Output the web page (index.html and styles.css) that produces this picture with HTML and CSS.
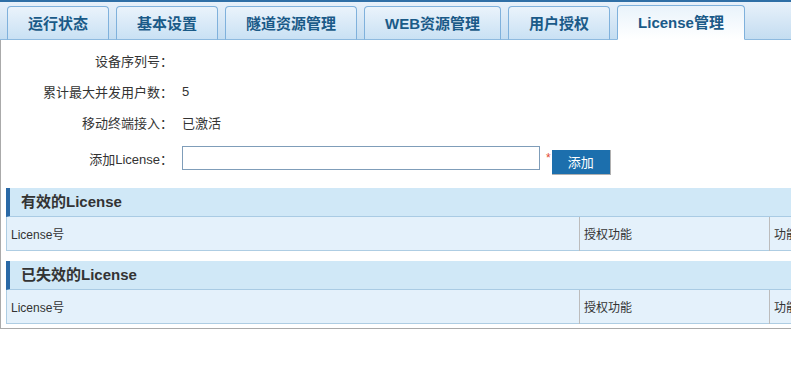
FILE: index.html
```html
<!DOCTYPE html>
<html lang="zh-CN">
<head>
<meta charset="UTF-8">
<title>License管理</title>
<link rel="stylesheet" href="styles.css">
</head>
<body>
<div class="tabbar">
    <a class="tab">运行状态</a>
    <a class="tab">基本设置</a>
    <a class="tab">隧道资源管理</a>
    <a class="tab">WEB资源管理</a>
    <a class="tab">用户授权</a>
    <a class="tab active">License管理</a>
</div>

<div class="panel">
    <div class="form">
        <div class="form-row">
            <div class="form-label">设备序列号：</div>
            <div class="form-value"></div>
        </div>
        <div class="form-row">
            <div class="form-label">累计最大并发用户数：</div>
            <div class="form-value">5</div>
        </div>
        <div class="form-row">
            <div class="form-label">移动终端接入：</div>
            <div class="form-value">已激活</div>
        </div>
        <div class="form-row form-row-input">
            <div class="form-label">添加License：</div>
            <div class="form-value">
                <input type="text" class="license-input">
                <span class="required">*</span>
                <button class="btn">添加</button>
            </div>
        </div>
    </div>

    <div class="section">
        <div class="section-title">有效的License</div>
        <table class="grid">
            <tr>
                <td class="col-no">License号</td>
                <td class="col-func">授权功能</td>
                <td>功能模块</td>
            </tr>
        </table>
    </div>

    <div class="section">
        <div class="section-title">已失效的License</div>
        <table class="grid">
            <tr>
                <td class="col-no">License号</td>
                <td class="col-func">授权功能</td>
                <td>功能模块</td>
            </tr>
        </table>
    </div>
</div>
</body>
</html>
```

FILE: styles.css
```css
html, body {
    overflow: hidden;
}

body {
    margin: 0;
    font-family: "Liberation Sans", "Noto Sans CJK SC", sans-serif;
    font-size: 13px;
    color: #333;
    background: #fff;
}

/* Tabs */
.tabbar {
    display: flex;
    align-items: flex-end;
    gap: 7px;
    height: 37px;
    padding-left: 7px;
    border-top: 2px solid #2f6fa6;
    border-bottom: 1px solid #8ebadf;
    background: linear-gradient(#e8f1fa, #c4ddf1);
}

.tab {
    display: block;
    height: 32px;
    line-height: 33px;
    padding: 0 20px;
    margin-bottom: -1px;
    border: 1px solid #7fb1dc;
    border-bottom: 1px solid #8ebadf;
    border-radius: 4px 4px 0 0;
    background: linear-gradient(#eaf3fb, #c9e1f4);
    color: #1a5a88;
    font-size: 15px;
    font-weight: bold;
    white-space: nowrap;
    cursor: pointer;
}

.tab.active {
    height: 33px;
    border-bottom-color: #fff;
    background: linear-gradient(#e9f3fb, #fff);
}

/* Panel */
.panel {
    width: 1100px;
    height: 288px;
    border-left: 1px solid #aaa;
    border-bottom: 1px solid #aaa;
    padding-left: 5px;
}

.form {
    padding-top: 5px;
    margin-left: -5px;
}

.form-row {
    display: flex;
    align-items: center;
    height: 31px;
}

.form-row-input {
    height: 40px;
}

.form-label {
    width: 172px;
    text-align: right;
    color: #333;
}

.form-value {
    display: flex;
    align-items: center;
    margin-left: 9px;
}

.license-input {
    width: 352px;
    height: 20px;
    margin: 0;
    padding: 1px 2px;
    border: 1px solid #7f9db9;
    font: inherit;
}

.required {
    margin-left: 6px;
    color: #e2492f;
    font-size: 12px;
}

.btn {
    width: 59px;
    height: 25px;
    margin: 8px 0 0 1px;
    padding: 0;
    border: none;
    border-right: 1px solid #b0b0b0;
    border-bottom: 1px solid #b0b0b0;
    background: #1c6fad;
    color: #fff;
    font-family: inherit;
    font-size: 13px;
    cursor: pointer;
}

/* Sections */
.section {
    margin-top: 10px;
}

.section-title {
    height: 28px;
    line-height: 28px;
    padding-left: 11px;
    border-left: 4px solid #2a69a6;
    border-bottom: 1px solid #a9cbe4;
    background: #d0e8f7;
    color: #333;
    font-size: 15px;
    font-weight: bold;
}

.grid {
    width: 100%;
    border-collapse: collapse;
    background: #e4f1fb;
    border-left: 1px solid #aecde3;
    border-bottom: 1px solid #aecde3;
}

.grid td {
    height: 33px;
    padding: 0 0 0 4px;
    font-size: 12px;
    color: #333;
    border-right: 1px solid #bcbcbc;
}

.grid .col-no {
    width: 568px;
}

.grid .col-func {
    width: 185px;
}
```
